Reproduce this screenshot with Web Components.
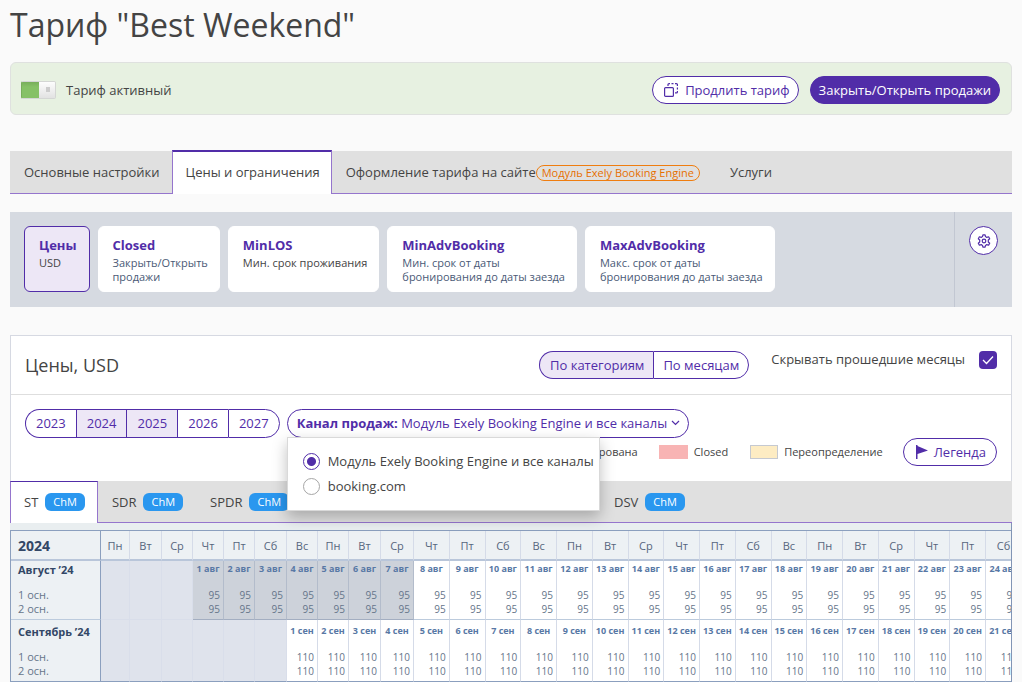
<!DOCTYPE html>
<html lang="ru">
<head>
<meta charset="utf-8">
<meta name="viewport" content="width=device-width, initial-scale=1">
<title>Тариф "Best Weekend"</title>
<style>
  body {
    margin: 0;
    background: #fafafa;
    color: #444;
    font: 13px/18px "Open Sans", "Noto Sans", sans-serif;
    --accent: #512da8;
    --accent-soft: #ede7f6;
    --accent-line: #9575cd;
  }
</style>
</head>
<body>
<rate-page></rate-page>

<script>
class PillButton extends HTMLElement {
  constructor() {
    super();
    this.attachShadow({ mode: "open" });
  }

  connectedCallback() {
    this.shadowRoot.innerHTML = `
      <style>
        :host { display: inline-block; }
        button {
          display: flex;
          align-items: center;
          height: 28px;
          padding: 0 var(--pill-padding, 8px);
          border: 1px solid var(--accent);
          border-radius: 14px;
          background: #fff;
          color: var(--accent);
          font: inherit;
          white-space: nowrap;
          cursor: pointer;
        }
        :host([primary]) button { background: var(--accent); color: #fff; }
        ::slotted(svg) { flex: none; margin: 0 6px 0 2px; }
      </style>
      <button type="button"><slot></slot></button>
    `;
  }
}

class SegmentedControl extends HTMLElement {
  constructor() {
    super();
    this.attachShadow({ mode: "open" });
  }

  connectedCallback() {
    const items = this.getAttribute("items").split("|");
    const active = (this.getAttribute("active") || "").split("|");
    this.shadowRoot.innerHTML = `
      <style>
        :host { display: inline-flex; }
        button {
          box-sizing: border-box;
          height: var(--segment-height, 28px);
          padding: 0 var(--segment-padding, 9px) 1px;
          border: 1px solid var(--accent);
          border-right-width: 0;
          background: #fff;
          color: var(--accent);
          font: inherit;
          white-space: nowrap;
          cursor: pointer;
        }
        button.on { background: var(--accent-soft); }
        button:first-of-type { padding-left: 10px; border-radius: 15px 0 0 15px; }
        button:last-of-type { border-right-width: 1px; border-radius: 0 15px 15px 0; }
      </style>
      ${items
        .map(
          (item) =>
            `<button type="button" class="${active.includes(item) ? "on" : ""}">${item}</button>`
        )
        .join("")}
    `;
  }
}

class RateStatus extends HTMLElement {
  constructor() {
    super();
    this.attachShadow({ mode: "open" });
  }

  connectedCallback() {
    this.shadowRoot.innerHTML = `
      <style>
        :host {
          display: flex;
          align-items: center;
          box-sizing: border-box;
          height: 53px;
          padding: 3px 11px 0 10px;
          border: 1px solid #dfe1df;
          border-radius: 6px;
          background: #e7f1e1;
        }
        label { display: flex; align-items: center; gap: 10px; margin-right: auto; }
        input {
          appearance: none;
          box-sizing: border-box;
          width: 35px;
          height: 18px;
          margin: 0;
          border: 1px solid #d4d6d4;
          border-radius: 2px;
          background:
            linear-gradient(#ccc, #ccc) 24px 5px / 4px 5px no-repeat,
            linear-gradient(#fdfdfd, #e2e2e2) 17px 0 / 16px 16px no-repeat,
            linear-gradient(#78ae5b, #86c166 5px);
        }
        input:checked { border-left-color: #78ae5b; }
        div { display: flex; gap: 11px; }
      </style>
      <label><input type="checkbox" checked>Тариф активный</label>
      <div><slot></slot></div>
    `;
  }
}

class TabBar extends HTMLElement {
  constructor() {
    super();
    this.attachShadow({ mode: "open" });
  }

  connectedCallback() {
    this.shadowRoot.innerHTML = `
      <style>
        :host {
          display: flex;
          box-sizing: border-box;
          height: 43px;
          border-bottom: 1px solid var(--accent-line);
          background: #e0e0e0;
        }
      </style>
      <slot></slot>
    `;
    this.setAttribute("role", "tablist");
  }
}

class TabItem extends HTMLElement {
  constructor() {
    super();
    this.attachShadow({ mode: "open" });
  }

  connectedCallback() {
    this.shadowRoot.innerHTML = `
      <style>
        :host { display: flex; }
        a {
          display: flex;
          align-items: center;
          box-sizing: border-box;
          padding: 0 12px 0 14px;
          color: inherit;
          text-decoration: none;
          white-space: nowrap;
        }
        :host([active]) a {
          margin: -1px 0;
          padding: 0 11px 2px 13px;
          border: 1px solid var(--accent-line);
          border-top: 2px solid var(--accent);
          border-bottom: 0;
          background: #fff;
        }
        :host([room]) a { padding: 0 13px 0 14px; }
        :host([room][active]) a { margin-top: 0; padding: 0 12px 2px 13px; border-top-width: 1px; }
        .module {
          margin: 2px 4px 0 0;
          padding: 0 5px;
          border: 1px solid #ef7d10;
          border-radius: 8px;
          color: #e66f00;
          font-size: 11px;
          line-height: 14px;
        }
        .chm {
          margin-left: 7px;
          padding: 0 8px;
          border-radius: 6px;
          background: #2a97ef;
          color: #fff;
          font-size: 11px;
          line-height: 18px;
        }
      </style>
      <a href="#" role="tab"><slot></slot>
        ${this.hasAttribute("module") ? `<span class="module">${this.getAttribute("module")}</span>` : ""}
        ${this.hasAttribute("room") ? `<span class="chm">ChM</span>` : ""}
      </a>
    `;
  }
}

class RestrictionCard extends HTMLElement {
  constructor() {
    super();
    this.attachShadow({ mode: "open" });
  }

  connectedCallback() {
    this.shadowRoot.innerHTML = `
      <style>
        :host { display: block; }
        button {
          display: flex;
          flex-direction: column;
          align-items: flex-start;
          box-sizing: border-box;
          height: 66px;
          padding: 9px 11px 0 14px;
          border: 1px solid #fff;
          border-radius: 6px;
          background: #fff;
          color: #4a5a76;
          font: inherit;
          font-size: 11px;
          line-height: 14px;
          text-align: left;
          cursor: pointer;
        }
        :host([active]) button {
          padding-right: 12px;
          border-color: var(--accent);
          background: var(--accent-soft);
        }
        b {
          margin-bottom: 2px;
          color: var(--accent);
          font-size: 13px;
          line-height: 18px;
        }
        :host([plain]) button { color: #444; }
      </style>
      <button type="button"><b>${this.getAttribute("name")}</b><span><slot></slot></span></button>
    `;
  }
}

class RestrictionBar extends HTMLElement {
  constructor() {
    super();
    this.attachShadow({ mode: "open" });
  }

  connectedCallback() {
    this.shadowRoot.innerHTML = `
      <style>
        :host { display: flex; height: 95px; background: #d6dae1; }
        .cards { display: flex; flex: 1; gap: 8px; padding: 14px; }
        .settings { padding: 14px; border-left: 1px solid #c2c7d2; }
        button {
          display: flex;
          align-items: center;
          justify-content: center;
          width: 29px;
          height: 29px;
          padding: 0;
          border: 1px solid var(--accent);
          border-radius: 50%;
          background: #fff;
          color: var(--accent);
          cursor: pointer;
        }
      </style>
      <div class="cards"><slot></slot></div>
      <div class="settings">
        <button type="button" aria-label="Настройки">
          <svg width="14" height="14" viewBox="0 0 14 14" fill="none" stroke="currentColor" stroke-width="1.2" stroke-linejoin="round">
            <path d="M5.900 .8h2.200l.4 1.800 1.300.8 1.800-.6 1.100 1.900L11.300 6v2l1.400 1.300-1.100 1.900-1.800-.6-1.300.8-.4 1.800H5.900l-.4-1.800-1.300-.8-1.800.6-1.100-1.900L2.700 8V6L1.300 4.700l1.100-1.900 1.800.6 1.300-.8z"/>
            <circle cx="7" cy="7" r="1.800"/>
          </svg>
        </button>
      </div>
    `;
  }
}

class ChannelSelect extends HTMLElement {
  constructor() {
    super();
    this.attachShadow({ mode: "open" });
    this.channels = ["Модуль Exely Booking Engine и все каналы", "booking.com"];
    this.selected = 0;
  }

  connectedCallback() {
    this.render();
  }

  select(index) {
    this.selected = index;
    this.render();
  }

  render() {
    this.shadowRoot.innerHTML = `
      <style>
        :host { display: block; position: relative; }
        button {
          display: flex;
          align-items: center;
          box-sizing: border-box;
          height: 29px;
          padding: 0 8px 1px 9px;
          border: 1px solid var(--accent);
          border-radius: 15px;
          background: #fff;
          color: var(--accent);
          font: inherit;
          white-space: pre;
          cursor: pointer;
        }
        svg { margin-left: 4px; }
        .menu {
          position: absolute;
          z-index: 2;
          top: 28px;
          left: 0;
          display: grid;
          gap: 7px;
          padding: 14px 5px 15px 15px;
          border: 1px solid #d9d9d9;
          background: #fff;
          box-shadow: 0 6px 14px rgba(0, 0, 0, .25);
        }
        label { display: flex; align-items: center; gap: 8px; white-space: nowrap; }
        input {
          appearance: none;
          box-sizing: border-box;
          width: 17px;
          height: 17px;
          margin: 0;
          border: 1px solid #a6a6a6;
          border-radius: 50%;
          background: #fff;
        }
        input:checked {
          border-color: var(--accent);
          background: radial-gradient(circle, var(--accent) 4px, #fff 5px);
        }
      </style>
      <button type="button" aria-expanded="true"><b>Канал продаж:</b> ${this.channels[this.selected]}<svg width="9" height="6" viewBox="0 0 9 6" fill="none" stroke="currentColor" stroke-width="1.2"><path d="M1 1l3.500 3.500L8 1"/></svg></button>
      <div class="menu">
        ${this.channels
          .map(
            (channel, index) =>
              `<label><input type="radio" name="channel" ${index === this.selected ? "checked" : ""}>${channel}</label>`
          )
          .join("")}
      </div>
    `;
    this.shadowRoot.querySelectorAll("input").forEach((input, index) => {
      input.addEventListener("change", () => this.select(index));
    });
  }
}

class PriceGrid extends HTMLElement {
  constructor() {
    super();
    this.attachShadow({ mode: "open" });
    this.days = ["Пн", "Вт", "Ср", "Чт", "Пт", "Сб", "Вс"];
    this.columns = 27;
    // first days of the month sit in narrower columns
    this.narrow = [29, 32, 31, 31, 31, 32, 31, 31, 32, 33];
    this.months = [
      { title: "Август ’24", short: "авг", offset: 3, past: 7, price: 95 },
      { title: "Сентябрь ’24", short: "сен", offset: 6, past: 0, price: 110 },
    ];
  }

  connectedCallback() {
    this.render();
  }

  renderDay(month, column) {
    const day = column - month.offset + 1;
    if (day < 1) return `<td class="empty"></td>`;
    return `<td class="${day <= month.past ? "past" : ""}"><b>${day} ${month.short}</b><span>${month.price}</span><span>${month.price}</span></td>`;
  }

  render() {
    const columns = Array.from({ length: this.columns }, (_, i) => i);
    this.shadowRoot.innerHTML = `
      <style>
        :host {
          display: block;
          overflow: hidden;
          margin: 0 -1px;
          padding-top: 7px;
          border-right: 1px solid #8295b5;
          background: #e9eef0;
        }
        table {
          width: 1012px;
          table-layout: fixed;
          border-spacing: 0;
          border-top: 1px solid #8b9fbe;
          border-left: 1px solid #8b9fbe;
          background: #fff;
          color: #66758a;
        }
        .title { width: 90px; }
        th, td {
          box-sizing: border-box;
          padding: 0;
          border-right: 1px solid #d5dbe8;
          white-space: nowrap;
        }
        thead th {
          height: 30px;
          padding-top: 2px;
          border-bottom: 2px solid #b9c6da;
          background: #edf1f4;
          color: #56657d;
          font-size: 11px;
          font-weight: 400;
        }
        th:first-child {
          padding-left: 7px;
          border-right-color: #8b9fbe;
          background: #edf1f4;
          text-align: left;
        }
        thead th:first-child { color: #334766; font-size: 14px; font-weight: 700; }
        tbody tr > * { height: 59px; border-bottom: 1px solid #bccbdd; vertical-align: top; }
        tbody tr:last-child > * { height: 62px; border-bottom-color: #8b9fbe; }
        tbody th { color: #66758a; font-size: 11px; font-weight: 400; }
        tbody th b { color: #334766; }
        b, span { display: block; }
        tbody b { height: 27px; line-height: 18px; }
        tbody span { line-height: 14px; }
        td { font-size: 10px; text-align: center; }
        td b { color: #5878a5; font-size: 9px; line-height: 16px; }
        td span { padding-right: 3px; text-align: right; }
        tbody tr:last-child b { height: 30px; line-height: 24px; }
        tbody tr:last-child td b { line-height: 22px; }
        .empty { background: #dfe3ec; border-color: #d9deea; }
        .past { background: #cdd2da; border-right-color: #b3bccb; }
        tbody tr > .past { border-bottom-color: #a3aec1; }
        tbody tr:first-child > .empty { border-bottom-color: #d9deea; }
      </style>
      <table>
        <colgroup>
          <col class="title">
          ${columns.map((i) => (this.narrow[i] ? `<col style="width: ${this.narrow[i]}px">` : "<col>")).join("")}
        </colgroup>
        <thead>
          <tr><th>2024</th>${columns.map((i) => `<th>${this.days[i % 7]}</th>`).join("")}</tr>
        </thead>
        <tbody>
          ${this.months
            .map(
              (month) => `
              <tr>
                <th><b>${month.title}</b><span>1 осн.</span><span>2 осн.</span></th>
                ${columns.map((i) => this.renderDay(month, i)).join("")}
              </tr>`
            )
            .join("")}
        </tbody>
      </table>
    `;
  }
}

class PricePanel extends HTMLElement {
  constructor() {
    super();
    this.attachShadow({ mode: "open" });
  }

  connectedCallback() {
    this.shadowRoot.innerHTML = `
      <style>
        :host { display: block; border: 1px solid #d6d9e2; border-bottom: 0; background: #fff; }
        header {
          display: flex;
          align-items: flex-start;
          height: 43px;
          padding: 15px 14px 0;
          border-bottom: 1px solid #dedede;
        }
        h2 { margin: 0 auto 0 0; font-size: 18px; font-weight: 400; line-height: 28px; }
        .hide { display: flex; gap: 14px; margin-left: 22px; line-height: 16px; }
        .hide input {
          appearance: none;
          width: 18px;
          height: 18px;
          margin: 0;
          border-radius: 4px;
          background: var(--accent);
        }
        .hide span { display: grid; color: #fff; }
        .hide span > * { grid-area: 1 / 1; place-self: center; }
        .hide svg { z-index: 1; pointer-events: none; }
        .filters {
          display: flex;
          gap: 7px;
          padding: 14px 14px 0;
          --segment-height: 29px;
          --segment-padding: 10px;
        }
        .legend {
          display: flex;
          align-items: center;
          justify-content: flex-end;
          height: 28px;
          padding: 0 14px 15px;
          font-size: 11px;
        }
        i { box-sizing: border-box; width: 29px; height: 14px; margin: 0 6px 0 21px; background: #f8b4b4; }
        .override { width: 28px; margin-left: 22px; border: 1px solid #c5c9d1; background: #fdecc3; }
        .legend pill-button { --pill-padding: 10px; margin-left: 20px; font-size: 13px; }
        tab-bar { height: 42px; margin: 0 -1px; }
      </style>
      <header>
        <h2>Цены, USD</h2>
        <segmented-control items="По категориям|По месяцам" active="По категориям"></segmented-control>
        <label class="hide">Скрывать прошедшие месяцы
          <span>
            <input type="checkbox" checked>
            <svg width="12" height="10" viewBox="0 0 12 10" fill="none" stroke="currentColor" stroke-width="1.3"><path d="M1 5l3.500 3.500L11 1.500"/></svg>
          </span>
        </label>
      </header>
      <div class="filters">
        <segmented-control items="2023|2024|2025|2026|2027" active="2024|2025"></segmented-control>
        <channel-select></channel-select>
      </div>
      <div class="legend">
        Не сформирована
        <i></i>Closed
        <i class="override"></i>Переопределение
        <pill-button><svg width="12" height="14" viewBox="0 0 12 14" fill="currentColor"><path d="M0 0h1.500v1L12 5.500 1.500 9v5H0z"/></svg>Легенда</pill-button>
      </div>
      <tab-bar>
        <tab-item room active>ST</tab-item>
        <tab-item room>SDR</tab-item>
        <tab-item room>SPDR</tab-item>
        <tab-item room>DLX</tab-item>
        <tab-item room>FAMI</tab-item>
        <tab-item room>APT</tab-item>
        <tab-item room>DSV</tab-item>
      </tab-bar>
      <price-grid></price-grid>
    `;
  }
}

class RatePage extends HTMLElement {
  constructor() {
    super();
    this.attachShadow({ mode: "open" });
  }

  connectedCallback() {
    this.shadowRoot.innerHTML = `
      <style>
        :host { display: block; padding: 0 10px; }
        h1 { margin: 0; padding: 1px 0 13px; font-size: 32px; font-weight: 400; line-height: 48px; }
        tab-bar { margin: 36px 0 18px; }
        price-panel { margin-top: 28px; }
      </style>
      <h1>Тариф "Best Weekend"</h1>
      <rate-status>
        <pill-button>
          <svg width="16" height="16" viewBox="0 0 16 16" fill="none" stroke="currentColor" stroke-width="1.2">
            <rect x="1.600" y="5.600" width="8.800" height="8.800" rx="1"/>
            <path d="M5 4V2.600a1 1 0 0 1 1-1h1M8.500 1.600h2M12 1.600h1.400a1 1 0 0 1 1 1V4M14.400 5.500v2M14.400 9v.9a1 1 0 0 1-1 1H12"/>
          </svg>Продлить тариф</pill-button>
        <pill-button primary>Закрыть/Открыть продажи</pill-button>
      </rate-status>
      <tab-bar>
        <tab-item>Основные настройки</tab-item>
        <tab-item active>Цены и ограничения</tab-item>
        <tab-item module="Модуль Exely Booking Engine">Оформление тарифа на сайте</tab-item>
        <tab-item>Услуги</tab-item>
      </tab-bar>
      <restriction-bar>
        <restriction-card name="Цены" active plain>USD</restriction-card>
        <restriction-card name="Closed">Закрыть/Открыть<br>продажи</restriction-card>
        <restriction-card name="MinLOS" plain>Мин. срок проживания</restriction-card>
        <restriction-card name="MinAdvBooking">Мин. срок от даты<br>бронирования до даты заезда</restriction-card>
        <restriction-card name="MaxAdvBooking">Макс. срок от даты<br>бронирования до даты заезда</restriction-card>
      </restriction-bar>
      <price-panel></price-panel>
    `;
  }
}

customElements.define("pill-button", PillButton);
customElements.define("segmented-control", SegmentedControl);
customElements.define("rate-status", RateStatus);
customElements.define("tab-bar", TabBar);
customElements.define("tab-item", TabItem);
customElements.define("restriction-card", RestrictionCard);
customElements.define("restriction-bar", RestrictionBar);
customElements.define("channel-select", ChannelSelect);
customElements.define("price-grid", PriceGrid);
customElements.define("price-panel", PricePanel);
customElements.define("rate-page", RatePage);
</script>
</body>
</html>
